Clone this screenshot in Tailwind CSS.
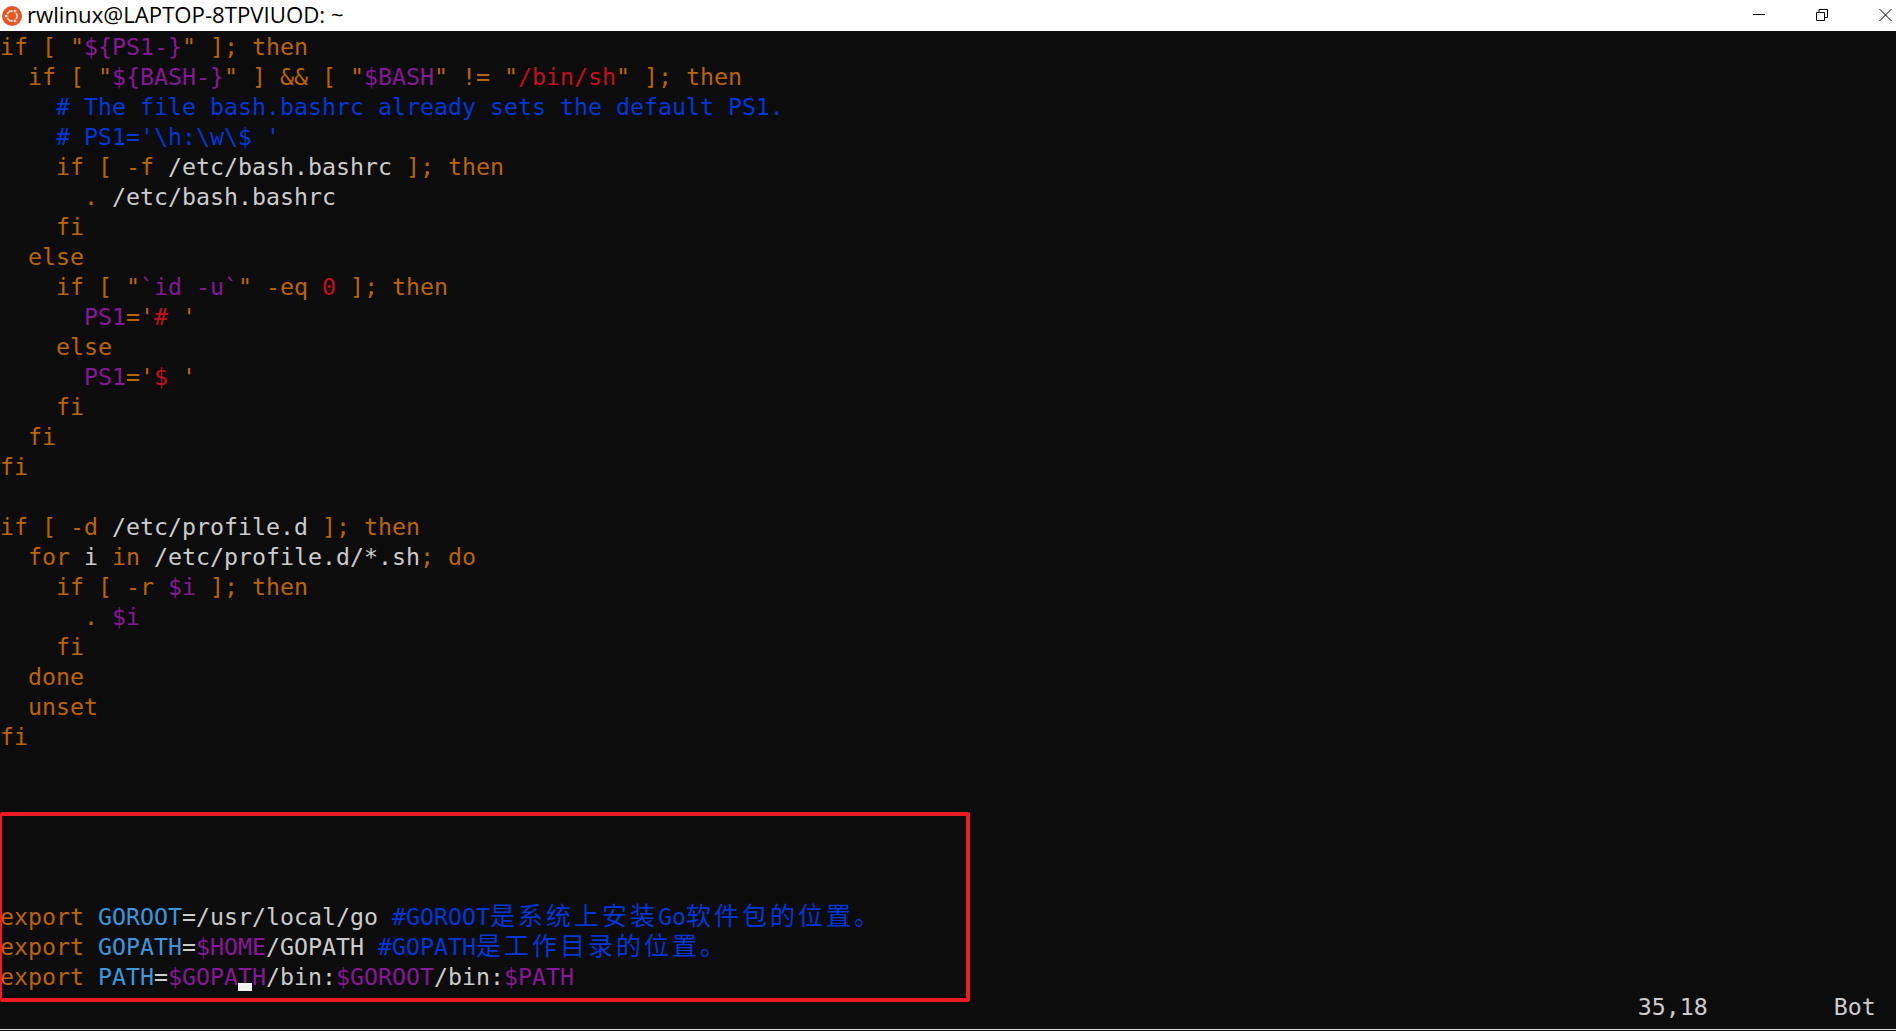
<!DOCTYPE html>
<html lang="en">
<head>
    <meta charset="UTF-8">
    <meta name="viewport" content="width=device-width, initial-scale=1.0">
    <title>rwlinux@LAPTOP-8TPVIUOD: ~</title>
    <script src="https://cdn.jsdelivr.net/npm/@tailwindcss/browser@4"></script>
</head>
<body class="h-[1031px] w-[1896px] overflow-hidden bg-[#0c0c0c]">
    <!-- Title bar -->
    <div class="flex h-[31px] items-center bg-white text-black">
        <svg class="ml-[2px] h-[20px] w-[20px]" viewBox="0 0 20 20">
            <circle cx="10" cy="10" r="10" fill="#e95420"/>
            <circle cx="10" cy="10" r="5" fill="none" stroke="#fbd5c6" stroke-width="2"/>
            <circle cx="4.200" cy="10" r="2" fill="#fbe3da" stroke="#e95420"/>
            <circle cx="13" cy="5" r="2" fill="#fbe3da" stroke="#e95420"/>
            <circle cx="13" cy="15" r="2" fill="#fbe3da" stroke="#e95420"/>
        </svg>
        <span class="mb-px ml-[5px] font-['Open_Sans',sans-serif] text-[22.2px]">rwlinux@LAPTOP-8TPVIUOD: ~</span>
        <div class="mb-px ml-auto flex items-center">
            <svg class="mr-[51px] h-[12px] w-[12px]" viewBox="0 0 12 12"><path d="M0 5.500H12" stroke="#000" stroke-width="1"/></svg>
            <svg class="mr-[51px] h-[12px] w-[12px]" viewBox="0 0 12 12" fill="none" stroke="#000"><path d="M.5 3.500h8v8h-8zM3 3.500V.5h8.500v8H8.500"/></svg>
            <svg class="mr-[4px] h-[12px] w-[13px]" viewBox="0 0 13 12" fill="none" stroke="#000"><path d="M.5 0l12 12M12.500 0l-12 12"/></svg>
        </div>
    </div>

    <!-- Terminal -->
    <div class="relative h-[999px] pt-px font-['DejaVu_Sans_Mono',monospace] text-[23.25px] text-[#bc6400] [&>div]:h-[30px] [&>div]:whitespace-pre [&>div]:leading-[30px]">
        <div>if [ "<span class="text-[#881798]">${PS1-}</span>" ]; then</div>
        <div>  if [ "<span class="text-[#881798]">${BASH-}</span>" ] &amp;&amp; [ "<span class="text-[#881798]">$BASH</span>" != "<span class="text-[#c50f1f]">/bin/sh</span>" ]; then</div>
        <div class="text-[#0037da]">    # The file bash.bashrc already sets the default PS1.</div>
        <div class="text-[#0037da]">    # PS1='\h:\w\$ '</div>
        <div>    if [ -f <span class="text-[#cccccc]">/etc/bash.bashrc</span> ]; then</div>
        <div>      . <span class="text-[#cccccc]">/etc/bash.bashrc</span></div>
        <div>    fi</div>
        <div>  else</div>
        <div>    if [ "<span class="text-[#881798]">`id -u`</span>" -eq <span class="text-[#c50f1f]">0</span> ]; then</div>
        <div>      <span class="text-[#881798]">PS1</span>='<span class="text-[#c50f1f]">#</span> '</div>
        <div>    else</div>
        <div>      <span class="text-[#881798]">PS1</span>='<span class="text-[#c50f1f]">$</span> '</div>
        <div>    fi</div>
        <div>  fi</div>
        <div>fi</div>
        <div></div>
        <div>if [ -d <span class="text-[#cccccc]">/etc/profile.d</span> ]; then</div>
        <div>  for <span class="text-[#cccccc]">i</span> in <span class="text-[#cccccc]">/etc/profile.d/*.sh</span>; do</div>
        <div>    if [ -r <span class="text-[#881798]">$i</span> ]; then</div>
        <div>      . <span class="text-[#881798]">$i</span></div>
        <div>    fi</div>
        <div>  done</div>
        <div>  unset</div>
        <div>fi</div>
        <div></div>
        <div></div>
        <div></div>
        <div></div>
        <div></div>
        <div>export <span class="text-[#3a96dd]">GOROOT</span><span class="text-[#cccccc]">=/usr/local/go </span><span class="text-[#0037da]">#GOROOT<span class="font-['Noto_Sans_CJK_SC',sans-serif] text-[25px] leading-[0] tracking-[3px]">是系统上安装</span>Go<span class="font-['Noto_Sans_CJK_SC',sans-serif] text-[25px] leading-[0] tracking-[3px]">软件包的位置。</span></span></div>
        <div>export <span class="text-[#3a96dd]">GOPATH</span><span class="text-[#cccccc]">=</span><span class="text-[#881798]">$HOME</span><span class="text-[#cccccc]">/GOPATH </span><span class="text-[#0037da]">#GOPATH<span class="font-['Noto_Sans_CJK_SC',sans-serif] text-[25px] leading-[0] tracking-[3px]">是工作目录的位置。</span></span></div>
        <div>export <span class="text-[#3a96dd]">PATH</span><span class="text-[#cccccc]">=</span><span class="text-[#881798]">$GOPATH</span><span class="text-[#cccccc]">/bin:</span><span class="text-[#881798]">$GOROOT</span><span class="text-[#cccccc]">/bin:</span><span class="text-[#881798]">$PATH</span></div>
        <div class="text-[#cccccc]">                                                                                                                     35,18         Bot</div>

        <!-- Cursor and the red annotation box drawn over the text -->
        <div class="absolute left-[238px] top-[952px] !h-[8px] w-[14px] bg-[#f2f2f2]"></div>
        <div class="absolute left-0 top-[781px] !h-[190px] w-[970px] rounded-[2px] border-[4px] border-l-[2px] border-[#ed1c24]"></div>
        <div class="absolute bottom-0 left-0 !h-px w-full bg-[#dcdcdc]"></div>
    </div>
</body>
</html>
